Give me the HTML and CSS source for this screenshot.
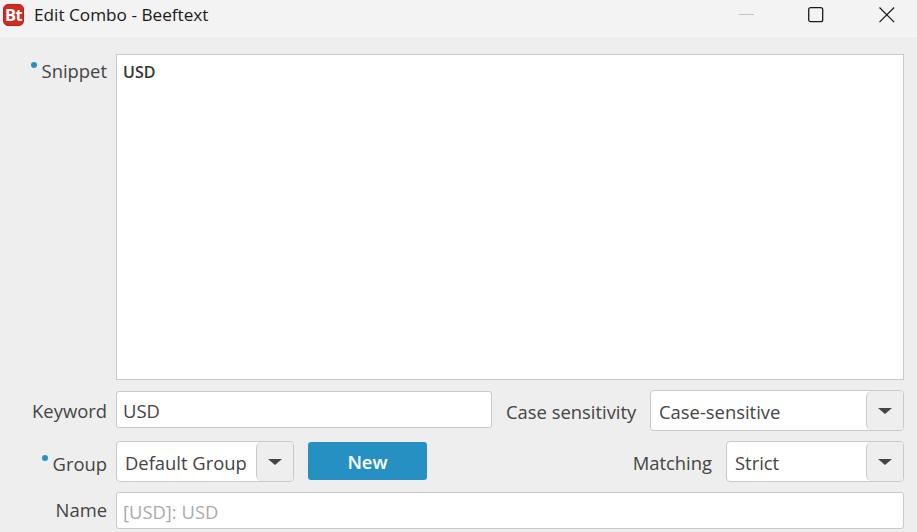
FILE: index.html
```html
<!DOCTYPE html>
<html lang="en">
<head>
    <meta charset="UTF-8">
    <meta name="viewport" content="width=device-width, initial-scale=1.0">
    <title>Edit Combo - Beeftext</title>
    <link rel="stylesheet" href="styles.css">
</head>
<body>
    <header class="titlebar">
        <div class="app-icon">Bt</div>
        <div class="title">Edit Combo - Beeftext</div>
        <div class="win-buttons">
            <svg class="win-min" width="16" height="16" viewBox="0 0 16 16"><path d="M0 7.5h15" stroke="#c4c4c4" fill="none"/></svg>
            <svg class="win-max" width="16" height="16" viewBox="0 0 16 16"><rect x=".7" y=".7" width="14" height="14" rx="2" stroke="#1a1a1a" stroke-width="1.3" fill="none"/></svg>
            <svg class="win-close" width="16" height="16" viewBox="0 0 16 16"><path d="M.5.5l14.6 14.6M15.1.5L.5 15.1" stroke="#1a1a1a" stroke-width="1.2" fill="none"/></svg>
        </div>
    </header>

    <form class="form">
        <div class="row row-snippet">
            <label class="label label-top"><span class="dot"></span>Snippet</label>
            <div class="field snippet">USD</div>
        </div>

        <div class="row row-keyword">
            <label class="label">Keyword</label>
            <div class="field input keyword">USD</div>
            <label class="label-side">Case sensitivity</label>
            <div class="select case-select">
                <span class="select-value">Case-sensitive</span>
                <span class="select-arrow"><i></i></span>
            </div>
        </div>

        <div class="row row-group">
            <label class="label label-group"><span class="dot"></span>Group</label>
            <div class="select group-select">
                <span class="select-value">Default Group</span>
                <span class="select-arrow"><i></i></span>
            </div>
            <button type="button" class="btn-new">New</button>
            <label class="label-side matching-label">Matching</label>
            <div class="select matching-select">
                <span class="select-value">Strict</span>
                <span class="select-arrow"><i></i></span>
            </div>
        </div>

        <div class="row row-name">
            <label class="label label-name">Name</label>
            <div class="field input name">[USD]: USD</div>
        </div>
    </form>
</body>
</html>
```

FILE: styles.css
```css
body {
    font-family: "Open Sans", "Noto Sans", sans-serif;
    margin: 0;
    padding: 0;
    width: 917px;
    height: 532px;
    overflow: hidden;
    background-color: #eeeeee;
    color: #444;
    font-size: 18.4px;
}

.titlebar {
    height: 37px;
    box-sizing: border-box;
    padding-bottom: 8px;
    background-color: #f3f3f3;
    display: flex;
    align-items: center;
    color: #1a1a1a;
}

.app-icon {
    width: 21px;
    height: 22px;
    box-sizing: border-box;
    margin-left: 3px;
    border: 1px solid #b5231b;
    border-radius: 5px;
    background-color: #d42a20;
    color: #fff;
    font-size: 16.5px;
    font-weight: 700;
    line-height: 20px;
    text-align: center;
    letter-spacing: -0.5px;
}

.title {
    margin-left: 10px;
    font-size: 17.2px;
}

.win-buttons {
    margin-left: auto;
    display: flex;
    align-items: center;
    padding-right: 22px;
}

.win-min {
    margin-right: 53px;
}

.win-max {
    margin-right: 55px;
}

.form {
    padding: 17px 13px 0 0;
}

.row {
    display: flex;
    align-items: center;
}

.label {
    width: 107px;
    margin-right: 9px;
    text-align: right;
    flex-shrink: 0;
    white-space: nowrap;
}

.label-top {
    align-self: flex-start;
    margin-top: 4px;
}

.label-group {
    padding-top: 4px;
}

.label-name {
    margin-top: -2px;
}

.dot {
    display: inline-block;
    width: 6px;
    height: 6px;
    border-radius: 50%;
    background-color: #2790c3;
    vertical-align: 10px;
    margin-right: 5px;
}

.field {
    background-color: #fff;
    border: 1px solid #c9c9c9;
    box-sizing: border-box;
}

.snippet {
    flex: 1;
    height: 326px;
    padding: 6px 6px;
    font-size: 16px;
    font-weight: 600;
    color: #333;
}

.input {
    height: 37px;
    line-height: 37px;
    padding: 0 6px;
    border-radius: 3px;
}

.row-keyword {
    margin-top: 10px;
    height: 41px;
}

.keyword {
    width: 376px;
    margin-top: -3px;
}

.label-side {
    white-space: nowrap;
}

.row-keyword .label-side {
    margin-left: 14px;
    padding-top: 1px;
}

.select {
    height: 41px;
    box-sizing: border-box;
    background-color: #fff;
    border: 1px solid #c9c9c9;
    border-radius: 4px;
    display: flex;
    align-items: center;
    overflow: hidden;
}

.select-value {
    flex: 1;
    padding-left: 8px;
    padding-top: 1px;
    white-space: nowrap;
}

.select-arrow {
    width: 37px;
    height: 100%;
    box-sizing: border-box;
    border-left: 1px solid #c9c9c9;
    border-radius: 6px 0 0 6px;
    background-color: #eeeeee;
    display: flex;
    align-items: center;
    justify-content: center;
}

.select-arrow i {
    width: 0;
    height: 0;
    border-left: 7.5px solid transparent;
    border-right: 7.5px solid transparent;
    border-top: 6px solid #444;
}

.case-select {
    width: 254px;
    margin-left: auto;
}

.row-group {
    margin-top: 10px;
    height: 41px;
}

.group-select {
    width: 178px;
}

.btn-new {
    margin-left: 14px;
    width: 119px;
    height: 38px;
    margin-top: -1px;
    border: none;
    border-radius: 3px;
    background-color: #2790c3;
    color: #fff;
    font-family: inherit;
    font-size: 18.5px;
    font-weight: 600;
    cursor: pointer;
}

.matching-label {
    margin-left: auto;
    margin-right: 14px;
    padding-top: 2px;
}

.matching-select {
    width: 178px;
}

.row-name {
    margin-top: 10px;
}

.name {
    flex: 1;
    color: #aaa;
}
```
